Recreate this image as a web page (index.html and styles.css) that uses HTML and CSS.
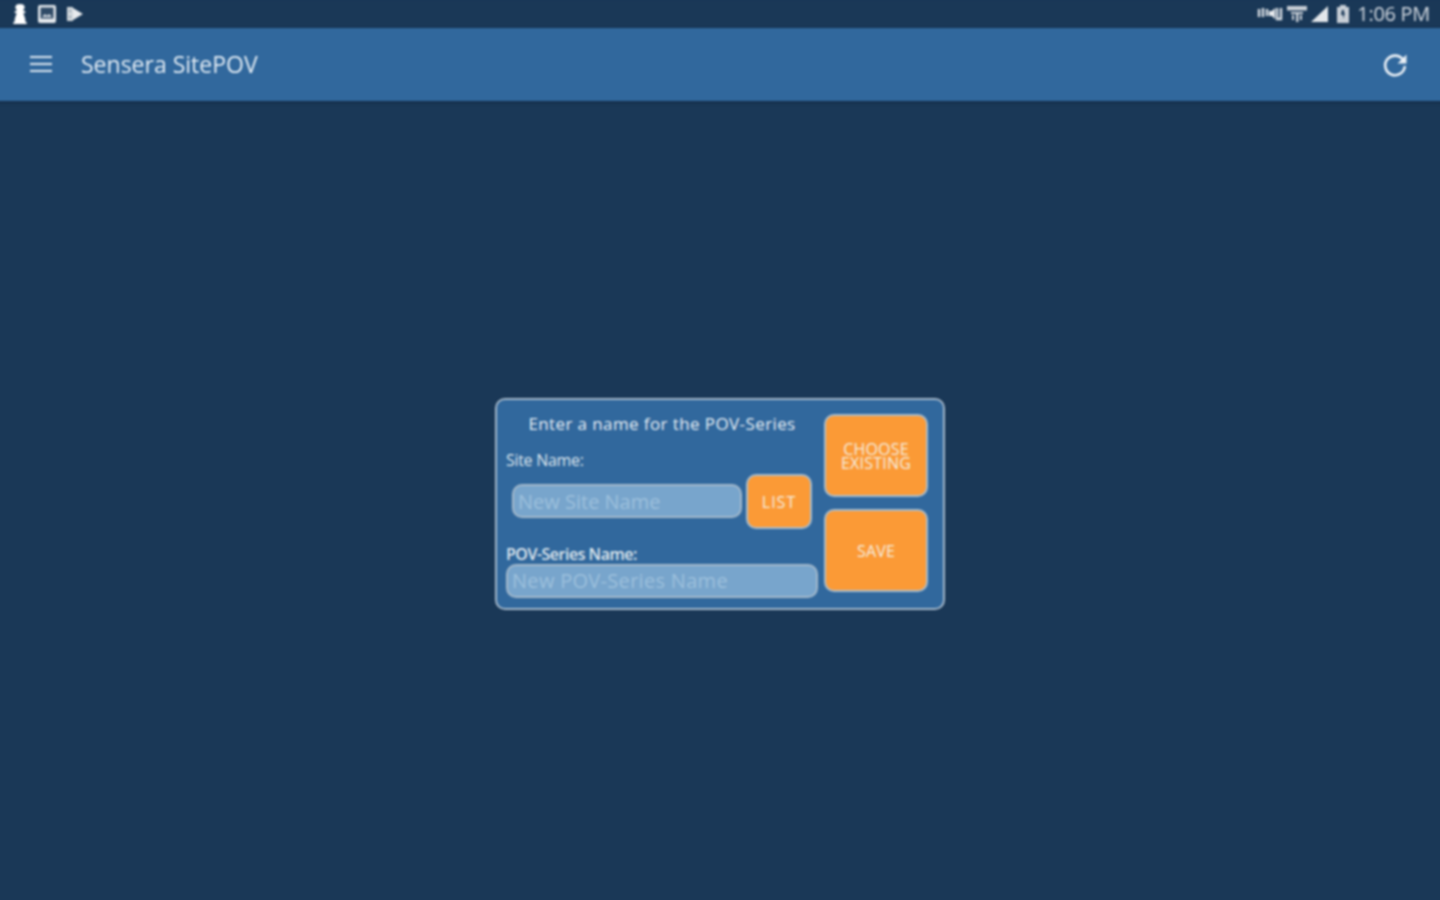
FILE: index.html
```html
<!DOCTYPE html>
<html lang="en">
<head>
<meta charset="utf-8">
<title>Sensera SitePOV</title>
<link rel="stylesheet" href="styles.css">
</head>
<body>
<div class="app">
  <header class="status-bar">
    <div class="status-icons">
      <svg class="s-icon" width="16" height="22" viewBox="2 1 12 23" preserveAspectRatio="none"><path fill="#fff" d="M8 2a3.500 3.500 0 0 1 3.500 3.500c0 1.600-.8 2.500-1.300 3.200L12 10v1.500h-1.500L12 18v2.500l1 .5v2H3v-2l1-.5V18l1.500-6.500H4V10l1.800-1.300C5.300 8 4.500 7.100 4.500 5.500A3.500 3.500 0 0 1 8 2z"/></svg>
      <svg class="s-icon" width="20" height="20" viewBox="0 0 20 20"><rect x="1" y="1" width="18" height="18" rx="2" fill="#e4e8ec"/><rect x="3.500" y="3.500" width="13" height="11" fill="#2f4a66"/><path fill="#dfe4ea" d="M5 13l3-3 2 2 2-2 3 3z"/></svg>
      <svg class="s-icon" width="18" height="20" viewBox="0 0 18 20"><path fill="#cfd5da" d="M1 3h6v14H1z"/><path fill="#e8ebee" d="M7 4l10 6-10 6z"/><path fill="#9aa8b6" d="M3 6h2v2H3zM3 12h2v2H3z"/></svg>
    </div>
    <div class="status-right">
      <svg width="26" height="18" viewBox="0 0 26 18"><path fill="none" stroke="#d7dde3" stroke-width="2.400" d="M2 4v8M6 3v9M10 4v7"/><path fill="#e6e9ec" d="M12 6h3l3-3v11l-3-3h-3z"/><path fill="none" stroke="#d7dde3" stroke-width="2.400" d="M20 3v11h4V3"/></svg>
      <svg width="20" height="18" viewBox="0 0 20 18"><path fill="#c7ced6" d="M0 1h20v4.500H0zM4 7h12v2H4z"/><path fill="#c7ced6" d="M9 9h2.500v8H9zM5 10h2v5H5zM13 10h2v5h-2z"/></svg>
      <svg class="signal" width="18" height="18" viewBox="0 0 18 18"><path fill="#e3e7eb" d="M18 1v16H1z"/></svg>
      <svg class="battery" width="14" height="20" viewBox="0 0 14 20"><path fill="#c7ced6" d="M4 1h6v2h3v16H1V3h3z"/><path fill="#1a3857" d="M6 6h2v3h1l-2 6v-4H5z"/></svg>
      <span class="clock">1:06 PM</span>
    </div>
  </header>
  <nav class="toolbar">
    <svg class="menu" width="22" height="18" viewBox="0 0 22 18"><path stroke="#dbe5ef" stroke-width="2" d="M0 2h22M0 9h22M0 16h22"/></svg>
    <span class="app-title">Sensera SitePOV</span>
    <svg class="refresh" width="26" height="26" viewBox="0 0 26 26"><path fill="none" stroke="#eaf0f6" stroke-width="2.600" d="M21.500 8.500A9.800 9.800 0 1 0 22.800 14"/><path fill="#eaf0f6" d="M24.500 2.500v9h-9z"/></svg>
  </nav>
  <main class="stage">
    <section class="card">
      <div class="form">
        <h1 class="card-title">Enter a name for the POV-Series</h1>
        <label class="label site-label">Site Name:</label>
        <div class="site-row">
          <div class="field site-field">New Site Name</div>
          <button class="btn list-btn">LIST</button>
        </div>
        <label class="label series-label">POV-Series Name:</label>
        <div class="field series-field">New POV-Series Name</div>
      </div>
      <div class="actions">
        <button class="btn action-btn">CHOOSE<br>EXISTING</button>
        <button class="btn action-btn">SAVE</button>
      </div>
    </section>
  </main>
</div>
</body>
</html>
```
FILE: styles.css
```css
* { box-sizing: border-box; }
html, body { margin: 0; height: 100%; }
body { background: #1a3857; font-family: "Open Sans", "Liberation Sans", sans-serif; color: #fff; overflow: hidden; }
.app { height: 900px; margin: 0 -4px; display: flex; flex-direction: column; filter: blur(0.8px); }
.status-bar { height: 28px; flex: none; display: flex; justify-content: space-between; align-items: center; padding: 0 14px 0 16px; background: #1a3857; }
.status-icons { display: flex; align-items: center; gap: 9px; }
.status-right { display: flex; align-items: center; gap: 4px; }
.signal { margin-left: -1px; }
.battery { margin-left: 4px; }
.clock { font-size: 20px; color: #d5dbe2; margin-left: 3px; letter-spacing: -0.3px; line-height: 28px; }
.toolbar { height: 73px; flex: none; display: flex; align-items: center; padding: 0 36px 0 34px; background: #31689d; box-shadow: 0 1px 3px rgba(10, 25, 45, .5); }
.menu { flex: none; margin-top: -2px; }
.app-title { margin-left: 29px; font-size: 23px; line-height: 28px; margin-top: -2px; color: #e4edf5; flex: 1; }
.refresh { flex: none; }
.stage { flex: 1; display: flex; align-items: flex-start; justify-content: center; padding-top: 297px; }
.card { width: 450px; height: 212px; display: flex; background: #31689d; border: 2px solid #a3b6c8; border-radius: 10px; padding: 14px 15px 9px 9px; gap: 6px; }
.form { width: 312px; display: flex; flex-direction: column; }
.card-title { margin: 0; font-size: 17px; font-weight: 400; text-align: center; color: #e8eff5; line-height: 20px; letter-spacing: 0.4px; }
.label { font-size: 16px; color: #dfe7ee; line-height: 18px; letter-spacing: -0.3px; }
.site-label { margin-top: 17px; }
.site-row { display: flex; align-items: center; gap: 4px; margin-left: 6px; margin-top: 5px; width: 300px; }
.field { background: #78a5cc; border: 2px solid #a2b8cb; border-radius: 10px; color: #9dc0dc; font-size: 20px; display: flex; align-items: center; padding-left: 4px; }
.site-field { width: 230px; height: 34px; flex: none; margin-bottom: 2px; padding-top: 1px; }
.series-label { margin-top: 16px; font-weight: 600; letter-spacing: -0.5px; }
.series-field { width: 312px; height: 34px; flex: none; margin-top: 1px; letter-spacing: 0.3px; padding-bottom: 2px; }
.btn { font-family: inherit; background: #fb9a36; color: #f6efe3; border: 2px solid #a9bccb; border-radius: 10px; padding: 0; text-transform: uppercase; }
.list-btn { width: 66px; height: 55px; font-size: 16px; flex: none; letter-spacing: 1px; }
.actions { width: 104px; display: flex; flex-direction: column; gap: 12px; }
.action-btn { height: 83px; flex: none; font-size: 16px; line-height: 14px; letter-spacing: 0.2px; }
```
